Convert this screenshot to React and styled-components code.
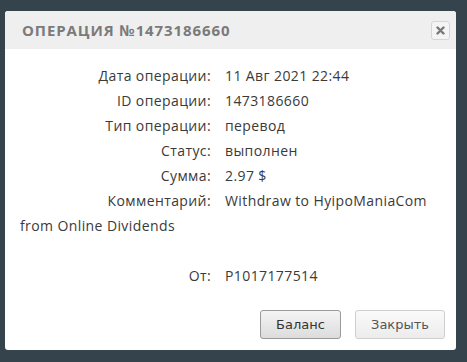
import React from 'react'
import styled, { createGlobalStyle } from 'styled-components'

const GlobalStyle = createGlobalStyle`
    html, body {
        margin: 0;
        padding: 0;
        background: #35434c;
    }
`;

const Page = styled.div`
    width: 467px;
    height: 362px;
    padding: 11px 11px 0 5px;
    box-sizing: border-box;
    font-family: "Open Sans", "Noto Sans", sans-serif;
`;

const Dialog = styled.div`
    background: #fff;
    border-radius: 3px;
    height: 339px;
    display: flex;
    flex-direction: column;
    overflow: hidden;
`;

const Header = styled.div`
    background: #efefef;
    height: 38px;
    display: flex;
    align-items: center;
    justify-content: space-between;
    padding: 0 6px 0 17px;
`;

const Title = styled.h3`
    margin: 0;
    font-size: 15px;
    font-weight: 700;
    letter-spacing: 0.9px;
    color: #7a7a7a;
    text-transform: uppercase;
`;

const CloseButton = styled.button`
    width: 19px;
    height: 19px;
    border: 1px solid #d6d6d6;
    border-radius: 3px;
    background: #f4f4f4;
    display: flex;
    align-items: center;
    justify-content: center;
    padding: 0;
    cursor: pointer;
`;

const Body = styled.div`
    flex: 1;
    padding: 14px 0 0 15px;
    font-size: 14px;
    letter-spacing: 0.4px;
    color: #3a3a3a;
`;

const Row = styled.div`
    display: grid;
    grid-template-columns: 191px auto;
    column-gap: 14px;
    height: 25px;
    align-items: center;
    margin-top: ${props => props.gap || 0}px;
`;

const Label = styled.span`
    text-align: right;
`;

const Wrap = styled.div`
    height: 25px;
    line-height: 25px;
`;

const Footer = styled.div`
    display: flex;
    justify-content: flex-end;
    gap: 14px;
    padding: 0 11px 11px 0;
`;

const Button = styled.button`
    height: 29px;
    width: ${props => props.w}px;
    border-radius: 3px;
    font-family: "DejaVu Sans", Verdana, sans-serif;
    font-size: 13px;
    color: ${props => props.primary ? '#333' : '#555'};
    border: 1px solid ${props => props.primary ? '#9a9a9a' : '#cfcfcf'};
    background: ${props => props.primary
        ? 'linear-gradient(#f4f4f4, #dcdcdc)'
        : 'linear-gradient(#fafafa, #ececec)'};
    cursor: pointer;
`;

const rows = [
    ['Дата операции:', '11 Авг 2021 22:44'],
    ['ID операции:', '1473186660'],
    ['Тип операции:', 'перевод'],
    ['Статус:', 'выполнен'],
    ['Сумма:', '2.97 $'],
]

const App = () => (
    <Page>
        <GlobalStyle />
        <Dialog>
            <Header>
                <Title>Операция №1473186660</Title>
                <CloseButton>
                    <svg width="9" height="9" viewBox="0 0 9 9">
                        <path d="M1.5 1.5 L7.5 7.5 M7.5 1.5 L1.5 7.5" stroke="#777" strokeWidth="2.4" strokeLinecap="round" />
                    </svg>
                </CloseButton>
            </Header>
            <Body>
                {rows.map(([l, v]) => (
                    <Row key={l}>
                        <Label>{l}</Label>
                        <span>{v}</span>
                    </Row>
                ))}
                <Row>
                    <Label>Комментарий:</Label>
                    <span>Withdraw to HyipoManiaCom</span>
                </Row>
                <Wrap>from Online Dividends</Wrap>
                <Row gap={25}>
                    <Label>От:</Label>
                    <span>P1017177514</span>
                </Row>
            </Body>
            <Footer>
                <Button w={81} primary>Баланс</Button>
                <Button w={90}>Закрыть</Button>
            </Footer>
        </Dialog>
    </Page>
)

export default App
